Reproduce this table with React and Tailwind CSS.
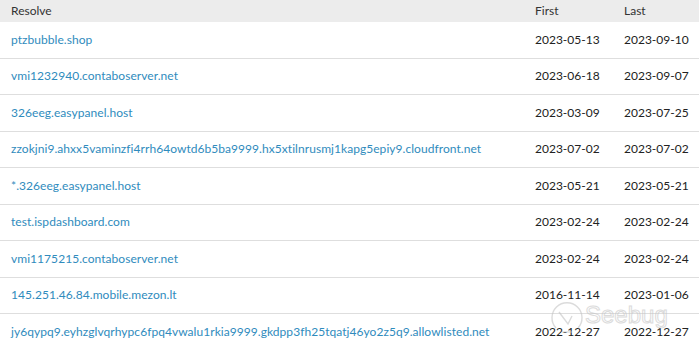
import React from "react";

const rows = [
  ["ptzbubble.shop", "2023-05-13", "2023-09-10"],
  ["vmi1232940.contaboserver.net", "2023-06-18", "2023-09-07"],
  ["326eeg.easypanel.host", "2023-03-09", "2023-07-25"],
  ["zzokjni9.ahxx5vaminzfi4rrh64owtd6b5ba9999.hx5xtilnrusmj1kapg5epiy9.cloudfront.net", "2023-07-02", "2023-07-02"],
  ["*.326eeg.easypanel.host", "2023-05-21", "2023-05-21"],
  ["test.ispdashboard.com", "2023-02-24", "2023-02-24"],
  ["vmi1175215.contaboserver.net", "2023-02-24", "2023-02-24"],
  ["145.251.46.84.mobile.mezon.lt", "2016-11-14", "2023-01-06"],
  ["jy6qypq9.eyhzglvqrhypc6fpq4vwalu1rkia9999.gkdpp3fh25tqatj46yo2z5q9.allowlisted.net", "2022-12-27", "2022-12-27"],
];

export default function App() {
  return (
    <div className="relative w-[699px] h-[347px] overflow-hidden bg-white text-[12px] [font-variant-ligatures:none] font-['Lato','Liberation_Sans',sans-serif]">
      <div className="flex h-[22px] items-center bg-[#ececec] text-[#333]">
        <div className="flex-1 pl-[11px]">Resolve</div>
        <div className="w-[89px]">First</div>
        <div className="w-[75px]">Last</div>
      </div>
      {rows.map((r, i) => (
        <div
          key={i}
          className={`flex h-[36.5px] items-center ${i < rows.length - 1 ? "border-b border-[#dedede]" : ""}`}
        >
          <div className="flex-1 pl-[11px] text-[#2f8bbd] whitespace-nowrap tracking-[0.05px]">{r[0]}</div>
          <div className="w-[89px] text-[#222]">{r[1]}</div>
          <div className="w-[75px] text-[#222]">{r[2]}</div>
        </div>
      ))}
      <div className="pointer-events-none absolute left-[550px] top-[298px] flex items-center gap-[1px] opacity-60">
        <svg width="34" height="40" viewBox="0 0 34 40" fill="none" stroke="#c4c4c4" strokeWidth="1.4">
          <path d="M6 30 A15 15 0 1 1 28 30" />
          <path d="M9 14 L18 26 L22 18" />
          <path d="M12 34 L22 34" />
        </svg>
        <span className="-mt-[6px] text-[24px] leading-none text-transparent [-webkit-text-stroke:1px_#c4c4c4] font-['Liberation_Sans',sans-serif]">
          Seebug
        </span>
      </div>
    </div>
  );
}
